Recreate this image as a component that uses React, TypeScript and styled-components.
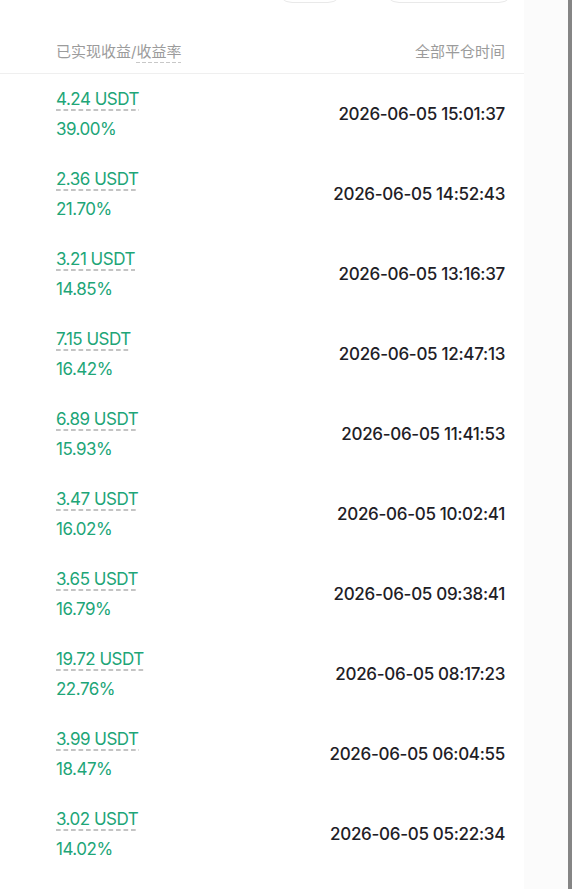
import React from 'react';
import styled, { createGlobalStyle } from 'styled-components';

const GlobalStyle = createGlobalStyle`
  html, body {
    margin: 0;
    padding: 0;
    background: #ffffff;
    overflow: hidden;
  }
  body {
    font-family: Inter, "Noto Sans CJK SC", "Noto Sans", sans-serif;
  }
`;

interface Trade {
  pnl: string;
  rate: string;
  time: string;
}

const trades: Trade[] = [
  { pnl: '4.24 USDT', rate: '39.00%', time: '2026-06-05 15:01:37' },
  { pnl: '2.36 USDT', rate: '21.70%', time: '2026-06-05 14:52:43' },
  { pnl: '3.21 USDT', rate: '14.85%', time: '2026-06-05 13:16:37' },
  { pnl: '7.15 USDT', rate: '16.42%', time: '2026-06-05 12:47:13' },
  { pnl: '6.89 USDT', rate: '15.93%', time: '2026-06-05 11:41:53' },
  { pnl: '3.47 USDT', rate: '16.02%', time: '2026-06-05 10:02:41' },
  { pnl: '3.65 USDT', rate: '16.79%', time: '2026-06-05 09:38:41' },
  { pnl: '19.72 USDT', rate: '22.76%', time: '2026-06-05 08:17:23' },
  { pnl: '3.99 USDT', rate: '18.47%', time: '2026-06-05 06:04:55' },
  { pnl: '3.02 USDT', rate: '14.02%', time: '2026-06-05 05:22:34' },
];

const Page = styled.div`
  display: grid;
  grid-template-columns: 524px 1fr 4px;
  width: 572px;
  height: 889px;
  overflow: hidden;
`;

const Panel = styled.main`
  background: #ffffff;
`;

const Gutter = styled.div`
  background: #fbfbfb;
`;

const ScrollThumb = styled.div`
  background: #858585;
`;

const Toolbar = styled.div`
  display: flex;
  gap: 39px;
  padding-left: 276px;
  margin-top: -29px;
  height: 32px;
`;

const PillButton = styled.button<{ $width: number }>`
  width: ${(p) => p.$width}px;
  height: 32px;
  border: 1px solid #e9e9e9;
  border-radius: 16px;
  background: #ffffff;
`;

const HeaderRow = styled.div`
  display: flex;
  justify-content: space-between;
  align-items: flex-end;
  height: 71px;
  box-sizing: border-box;
  padding: 0 19px 11px 56px;
  border-bottom: 1px solid #efefef;
  font-size: 15px;
  line-height: 20px;
  color: #9b9b9b;
`;

const Dashed = styled.span`
  padding-bottom: 2px;
  background-image: linear-gradient(to right, #c8c8c8 60%, transparent 60%);
  background-size: 6px 1px;
  background-repeat: repeat-x;
  background-position: 0 100%;
`;

const Row = styled.div`
  display: flex;
  justify-content: space-between;
  align-items: center;
  height: 80px;
  padding: 0 19px 0 56px;
`;

const Profit = styled.div`
  display: flex;
  flex-direction: column;
  align-items: flex-start;
  gap: 9px;
  color: #20a577;
  font-size: 17px;
  letter-spacing: -0.5px;
`;

const Amount = styled.span`
  line-height: 19px;
  padding-bottom: 2px;
  background-image: linear-gradient(to right, #c4c4c4 66%, transparent 66%);
  background-size: 7.5px 2px;
  background-repeat: repeat-x;
  background-position: 0 100%;
`;

const Rate = styled.span`
  line-height: 19px;
`;

const Time = styled.div`
  font-size: 17px;
  font-weight: 500;
  color: #1e2026;
  letter-spacing: -0.3px;
`;

export default function App() {
  return (
    <Page>
      <GlobalStyle />
      <Panel>
        <Toolbar>
          <PillButton $width={68} />
          <PillButton $width={132} />
        </Toolbar>
        <HeaderRow>
          <span>
            已实现收益/<Dashed>收益率</Dashed>
          </span>
          <span>全部平仓时间</span>
        </HeaderRow>
        {trades.map((t) => (
          <Row key={t.time}>
            <Profit>
              <Amount>{t.pnl}</Amount>
              <Rate>{t.rate}</Rate>
            </Profit>
            <Time>{t.time}</Time>
          </Row>
        ))}
      </Panel>
      <Gutter />
      <ScrollThumb />
    </Page>
  );
}
